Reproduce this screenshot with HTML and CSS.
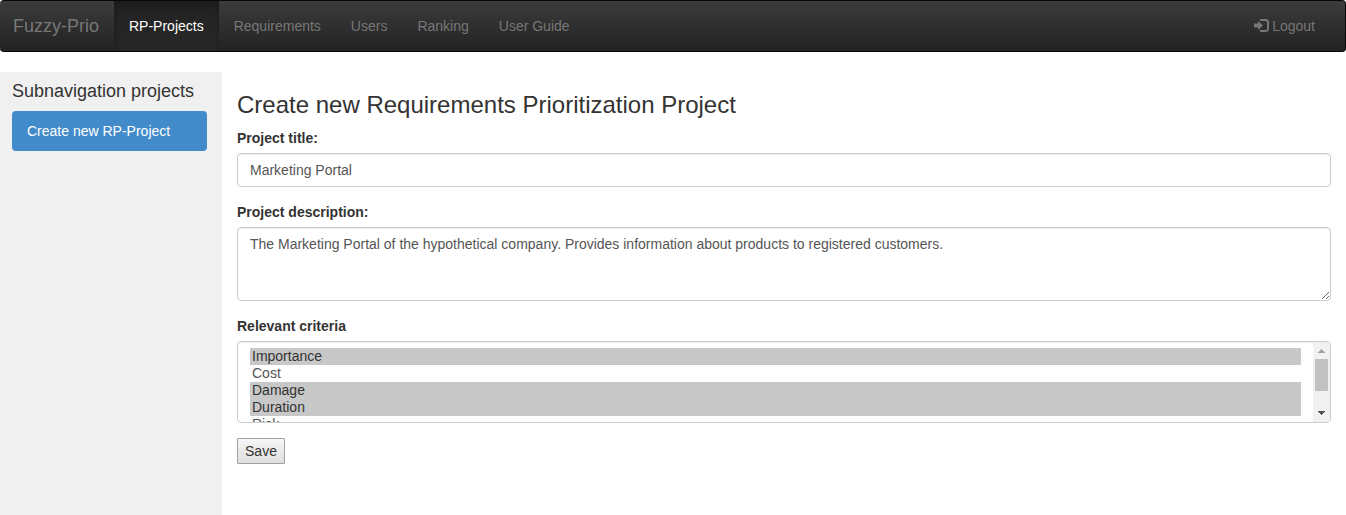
FILE: index.html
```html
<!DOCTYPE html>
<html lang="en">
<head>
<meta charset="utf-8">
<title>Fuzzy-Prio</title>
<link rel="stylesheet" href="styles.css">
</head>
<body>
<nav class="navbar">
  <a class="brand">Fuzzy-Prio</a>
  <a class="nav-link active">RP-Projects</a>
  <a class="nav-link">Requirements</a>
  <a class="nav-link">Users</a>
  <a class="nav-link">Ranking</a>
  <a class="nav-link">User Guide</a>
  <a class="nav-link logout"><svg class="login-icon" width="15" height="14" viewBox="0 0 15 14"><path fill="currentColor" d="M0 4.500h4V2l5 4.500L4 11V8.500H0z"/><path fill="none" stroke="currentColor" stroke-width="2" d="M6 1h5.500Q14 1 14 3.500v6Q14 12 11.500 12H6"/></svg>Logout</a>
</nav>
<div class="layout">
  <aside class="sidebar">
    <h4 class="side-title">Subnavigation projects</h4>
    <a class="pill">Create new RP-Project</a>
  </aside>
  <main class="content">
    <h3 class="title">Create new Requirements Prioritization Project</h3>
    <label class="label" for="title">Project title:</label>
    <input class="control" id="title" type="text" value="Marketing Portal">
    <label class="label" for="description">Project description:</label>
    <textarea class="control area" id="description" spellcheck="false">The Marketing Portal of the hypothetical company. Provides information about products to registered customers.</textarea>
    <div class="label">Relevant criteria</div>
    <div class="control listbox">
      <div class="options">
        <div class="option selected">Importance</div>
        <div class="option">Cost</div>
        <div class="option selected">Damage</div>
        <div class="option selected">Duration</div>
        <div class="option">Risk</div>
      </div>
      <div class="scrollbar">
        <svg class="arrow" width="17" height="17" viewBox="0 0 17 17" shape-rendering="crispEdges"><path fill="#a3a3a3" d="M8 7h1v1h1v1h1v1h1v1H5v-1h1V9h1V8h1z"/></svg>
        <div class="thumb"></div>
        <svg class="arrow down" width="17" height="17" viewBox="0 0 17 17" shape-rendering="crispEdges"><path fill="#505050" d="M5 6h7v1h-1v1h-1v1H9v1H8V9H7V8H6V7H5z"/></svg>
      </div>
    </div>
    <button class="save">Save</button>
  </main>
</div>
</body>
</html>
```
FILE: styles.css
```css
* { box-sizing: border-box; }
body {
  margin: 0;
  height: 515px;
  overflow: hidden;
  display: flex;
  flex-direction: column;
  font: 14px/20px "Liberation Sans", Arial, sans-serif;
  color: #333;
  background: #fff;
}
.navbar {
  display: flex;
  flex: none;
  height: 52px;
  margin-bottom: 20px;
  padding-right: 15px;
  border: 1px solid #080808;
  border-left-width: 0;
  border-radius: 4px;
  background: linear-gradient(#3c3c3c, #222);
  color: #777;
}
.brand { width: 114px; padding: 15px 0 15px 13px; font-size: 18px; }
.nav-link { padding: 15px; }
.active {
  color: #fff;
  background: linear-gradient(#222, #282828);
  box-shadow: inset 0 3px 9px rgba(0, 0, 0, .25);
}
.logout { margin-left: auto; display: flex; }
.login-icon { margin: 3px 3px 0 0; }
.layout { display: flex; flex: 1; }
.sidebar { width: 222px; padding: 9px 15px 0 12px; background: #f0f0f0; }
.side-title { margin: 0 0 10px; font-size: 18px; line-height: 20px; font-weight: 400; }
.pill {
  display: block;
  padding: 10px 15px;
  border-radius: 4px;
  background: #428bca;
  color: #fff;
}
.content { flex: 1; padding: 20px 15px 0; }
.title { margin: 0 0 10px; font-size: 24px; line-height: 26px; font-weight: 400; }
.label { display: block; margin-bottom: 5px; font-weight: 700; }
.control {
  display: block;
  width: 100%;
  height: 34px;
  margin: 0 0 15px;
  padding: 6px 12px;
  border: 1px solid #ccc;
  border-radius: 4px;
  background: #fff;
  color: #555;
  font: inherit;
  box-shadow: inset 0 1px 1px rgba(0, 0, 0, .075);
}
.area { height: 74px; overflow: auto; resize: both; }
.listbox { display: flex; height: 82px; padding: 1px 0 0 12px; overflow: hidden; }
.options { flex: 1; height: 79px; padding: 5px 12px 0 0; overflow: hidden; }
.option { height: 17px; padding: 0 2px; line-height: 17px; }
.selected { background: #c8c8c8; color: #333; }
.scrollbar { display: flex; flex-direction: column; width: 17px; height: 79px; background: #f1f1f1; }
.arrow { display: block; flex: none; margin-top: -1px; }
.thumb { width: 13px; height: 32px; margin-left: 2px; background: #c1c1c1; }
.down { margin-top: auto; }
.save {
  display: block;
  width: 48px;
  height: 26px;
  padding: 0;
  border: 1px solid #a0a0a0;
  border-radius: 1px;
  background: linear-gradient(#f6f6f6, #dedede);
  color: #333;
  font: inherit;
}
```
